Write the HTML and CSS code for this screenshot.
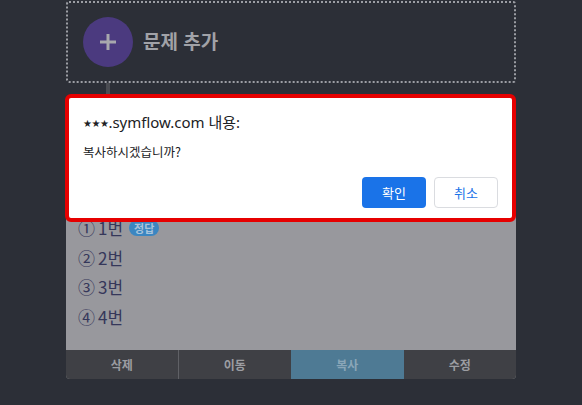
FILE: index.html
```html
<!DOCTYPE html>
<html lang="ko">

<head>
  <meta charset="UTF-8">
  <meta name="viewport" content="width=device-width, initial-scale=1.0">
  <title>문제 복사</title>
  <link rel="stylesheet" href="styles.css">
</head>

<body>
  <div class="page">
    <div class="addBox">
      <span class="addIcon">
        <svg width="20" height="20" viewBox="0 0 20 20">
          <path d="M10 2v16M2 10h16" stroke="#a8a8ad" stroke-width="3" fill="none" />
        </svg>
      </span>
      <span class="addLabel">문제 추가</span>
    </div>
    <div class="connector"></div>
    <div class="dialog">
      <p class="dialogTitle"><span class="stars">★★★</span>.symflow.com 내용:</p>
      <p class="dialogMessage">복사하시겠습니까?</p>
      <div class="dialogButtons">
        <button class="btn btnPrimary">확인</button>
        <button class="btn btnSecondary">취소</button>
      </div>
    </div>
    <div class="card">
      <ul class="options">
        <li><span class="num">①</span> 1번 <span class="badge">정답</span></li>
        <li><span class="num">②</span> 2번</li>
        <li><span class="num">③</span> 3번</li>
        <li><span class="num">④</span> 4번</li>
      </ul>
      <div class="tabs">
        <div class="tab tabDivided">삭제</div>
        <div class="tab">이동</div>
        <div class="tab tabActive">복사</div>
        <div class="tab">수정</div>
      </div>
    </div>
  </div>
</body>

</html>
```

FILE: styles.css
```css
html,
body {
  margin: 0;
  padding: 0;
  background-color: #2c2f37;
  font-family: "Noto Sans", "Noto Sans CJK KR", sans-serif;
}

* {
  box-sizing: border-box;
}

.page {
  width: 450px;
  margin-left: 66px;
  padding-top: 1px;
}

.addBox {
  height: 82px;
  border: 2px dotted #9c9ea4;
  border-radius: 3px;
  display: flex;
  align-items: center;
  padding-left: 15px;
  gap: 10px;
}

.addIcon {
  width: 50px;
  height: 50px;
  border-radius: 50%;
  background-color: #4b3a7f;
  display: flex;
  align-items: center;
  justify-content: center;
}

.addLabel {
  color: #a1a2a7;
  font-family: "Noto Sans CJK KR", sans-serif;
  font-weight: bold;
  font-size: 19px;
  margin-bottom: 3px;
}

.connector {
  width: 4px;
  height: 11px;
  margin-left: 40px;
  background-color: #4a4c52;
}

.dialog {
  position: relative;
  z-index: 2;
  height: 128px;
  margin-left: -1px;
  background-color: white;
  border: 4px solid #e60000;
  border-radius: 6px;
  padding: 14px 14px 0 14px;
}

.dialogTitle {
  margin: 0;
  font-size: 15px;
  color: #202124;
  line-height: 20px;
}

.stars {
  font-family: "DejaVu Sans", sans-serif;
  font-size: 10px;
  letter-spacing: -0.5px;
  vertical-align: 1px;
}

.dialogMessage {
  margin: 9px 0 0 0;
  font-family: "Noto Sans CJK KR", sans-serif;
  font-size: 12.5px;
  color: #202124;
  line-height: 18px;
}

.dialogButtons {
  display: flex;
  justify-content: flex-end;
  gap: 8px;
  margin-top: 16px;
}

.btn {
  width: 64px;
  height: 31px;
  border-radius: 4px;
  font-family: "Noto Sans CJK KR", sans-serif;
  font-size: 13px;
  cursor: pointer;
}

.btnPrimary {
  background-color: #1a73e8;
  border: none;
  color: white;
}

.btnSecondary {
  background-color: white;
  border: 1px solid #dadce0;
  color: #1a73e8;
}

.card {
  background-color: #98989d;
  border-radius: 0 0 4px 4px;
}

.options {
  list-style: none;
  margin: -9px 0 0 0;
  padding: 0 0 19px 12px;
}

.options li {
  height: 29.5px;
  line-height: 29.5px;
  font-family: "Noto Sans CJK KR", sans-serif;
  font-size: 17px;
  color: #35375a;
  display: flex;
  align-items: center;
  gap: 3px;
}

.num {
  font-size: 17px;
}

.badge {
  margin-left: 3px;
  background-color: #3b86c1;
  color: #a8c4dc;
  font-size: 11px;
  font-weight: bold;
  line-height: 16px;
  padding: 0 5px;
  border-radius: 8px;
}

.tabs {
  display: grid;
  grid-template-columns: repeat(4, 1fr);
  height: 29px;
  background-color: #3f4045;
  border-radius: 0 0 4px 4px;
  overflow: hidden;
}

.tab {
  display: flex;
  align-items: center;
  justify-content: center;
  color: #9c9da2;
  font-family: "Noto Sans CJK KR", sans-serif;
  font-weight: bold;
  font-size: 12px;
}

.tabDivided {
  border-right: 1px solid #606166;
}

.tabActive {
  background-color: #4e7a94;
  color: #8aa6b8;
}
```
